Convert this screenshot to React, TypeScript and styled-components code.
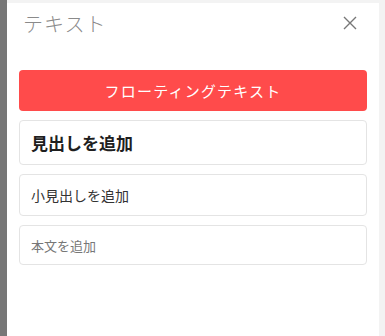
import React from "react";
import styled, { createGlobalStyle } from "styled-components";

const Global = createGlobalStyle`
  html, body { margin: 0; padding: 0; }
  body {
    background: #f3f3f3;
    font-family: "Noto Sans CJK JP", "Noto Sans", sans-serif;
    width: 385px;
    height: 336px;
    overflow: hidden;
  }
`;

const Page = styled.div`
  display: flex;
  height: 336px;
`;

const SideStrip = styled.div`
  width: 7px;
  flex: none;
  background: #777777;
`;

const Panel = styled.div`
  width: 372px;
  flex: none;
  margin-top: 3px;
  background: #ffffff;
  display: flex;
  flex-direction: column;
`;

const Header = styled.div`
  display: flex;
  align-items: center;
  justify-content: space-between;
  height: 40px;
  padding: 0 22px 0 16px;
`;

const Title = styled.div`
  font-size: 20px;
  font-weight: 300;
  color: #8a8a8a;
  letter-spacing: 1px;
`;

const CloseButton = styled.button`
  border: none;
  background: none;
  padding: 0;
  width: 14px;
  height: 14px;
  display: flex;
  cursor: pointer;
`;

const Body = styled.div`
  display: flex;
  flex-direction: column;
  gap: 9px;
  padding: 27px 12px 0 12px;
`;

const PrimaryButton = styled.button`
  height: 41px;
  border: none;
  border-radius: 4px;
  background: #ff4b4b;
  color: #ffffff;
  font-family: inherit;
  font-size: 15px;
  letter-spacing: 1.2px;
  cursor: pointer;
`;

const TextCard = styled.div<{ $h: number; $size: number; $weight: number; $color: string }>`
  height: ${(p) => p.$h}px;
  box-sizing: border-box;
  border: 1px solid #e4e4e4;
  border-radius: 4px;
  display: flex;
  align-items: center;
  padding-left: 11px;
  font-size: ${(p) => p.$size}px;
  font-weight: ${(p) => p.$weight};
  color: ${(p) => p.$color};
`;

export default function App() {
  return (
    <>
      <Global />
      <Page>
        <SideStrip />
        <Panel>
          <Header>
            <Title>テキスト</Title>
            <CloseButton aria-label="close">
              <svg width="14" height="14" viewBox="0 0 14 14">
                <path d="M1 1L13 13M13 1L1 13" stroke="#777" strokeWidth="1.4" />
              </svg>
            </CloseButton>
          </Header>
          <Body>
            <PrimaryButton>フローティングテキスト</PrimaryButton>
            <TextCard $h={45} $size={17} $weight={700} $color="#1f1f1f">見出しを追加</TextCard>
            <TextCard $h={42} $size={14} $weight={400} $color="#333">小見出しを追加</TextCard>
            <TextCard $h={40} $size={13} $weight={400} $color="#777">本文を追加</TextCard>
          </Body>
        </Panel>
      </Page>
    </>
  );
}
